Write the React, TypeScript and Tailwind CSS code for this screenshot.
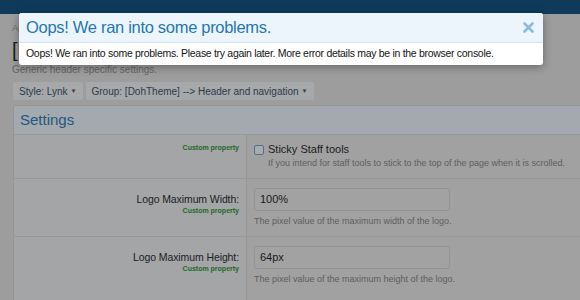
import React from "react";

const Custom = () => (
  <div className="text-[7px] leading-[9px] font-bold text-[#23682a]">Custom property</div>
);

const TextRow = ({ label, value, help, last }: { label: string; value: string; help: string; last?: boolean }) => (
  <div className="flex border-t border-[#989898]">
    <div className="w-[233px] shrink-0 bg-[#a4a5a7] pt-[14px] pr-[7px] text-right border-r border-[#959595]">
      <div className="text-[10.5px] tracking-[-0.1px] leading-[13px] text-[#1d1d1d]">{label}</div>
      <Custom />
    </div>
    <div className={last ? "flex-1 pl-[7px] pt-[9px] pb-[24px]" : "flex-1 pl-[7px] pt-[9px] pb-[9px]"}>
      <div className="w-[196px] h-[23px] rounded-[3px] border border-[#939393] bg-[#a2a2a2] px-[5px] flex items-center text-[11px] text-[#1a1a1a]">
        {value}
      </div>
      <div className="mt-[4px] text-[9px] leading-[12px] text-[#5e5e5e]">{help}</div>
    </div>
  </div>
);

export default function App() {
  return (
    <div
      className="relative w-[580px] h-[300px] overflow-hidden bg-[#9d9d9d]"
      style={{ fontFamily: '"Liberation Sans", Arial, sans-serif' }}
    >
      {/* dimmed page */}
      <div className="h-[14px] bg-[#103a5a]" />
      <div className="px-[12px] pt-[9px]">
        <div className="text-[9px] leading-[11px] text-[#6c6c6c]">Appearance › Styles</div>
        <div className="mt-[5px] text-[20px] leading-[23px] text-[#1c1c1c]">[DohTheme] Header and navigation</div>
        <div className="text-[10px] leading-[12px] text-[#666] mt-[2px]">Generic header specific settings.</div>
        <div className="mt-[6px] flex gap-[3px] pl-px">
          <div className="h-[18px] px-[6px] flex items-center gap-[3px] rounded-[2px] bg-[#a6a8aa] text-[10px] text-[#2c3b4b]">
            Style: Lynk <span className="text-[6px]">▼</span>
          </div>
          <div className="h-[18px] px-[6px] flex items-center gap-[3px] rounded-[2px] bg-[#a6a8aa] text-[10px] text-[#2c3b4b]">
            Group: [DohTheme] --&gt; Header and navigation <span className="text-[6px]">▼</span>
          </div>
        </div>
      </div>

      <div className="ml-[13px] mt-[5px] w-[600px] border border-[#959595] rounded-[2px] bg-[#a1a1a1]">
        <div className="h-[28px] flex items-center px-[6px] bg-[#a3a9ae] text-[15px] text-[#255780]">Settings</div>
        <div className="flex border-t border-[#989898]">
          <div className="w-[233px] shrink-0 bg-[#a4a5a7] pt-[8px] pr-[7px] text-right border-r border-[#959595]">
            <Custom />
          </div>
          <div className="flex-1 pl-[7px] pt-[8px] pb-[9px]">
            <div className="flex items-center gap-[4px]">
              <div className="w-[10px] h-[10px] rounded-[2px] border border-[#51708f] bg-[#a8abaf]" />
              <span className="text-[11px] leading-[13px] text-[#1c1c1c]">Sticky Staff tools</span>
            </div>
            <div className="pl-[14px] mt-px text-[9px] leading-[12px] text-[#5e5e5e]">
              If you intend for staff tools to stick to the top of the page when it is scrolled.
            </div>
          </div>
        </div>
        <TextRow label="Logo Maximum Width:" value="100%" help="The pixel value of the maximum width of the logo." />
        <TextRow label="Logo Maximum Height:" value="64px" help="The pixel value of the maximum height of the logo." last />
      </div>

      {/* error overlay */}
      <div className="absolute left-[19px] top-[13px] w-[524px] rounded-[3px] bg-white shadow-[0_2px_8px_rgba(0,0,0,0.35)] overflow-hidden">
        <div className="h-[30px] flex items-center justify-between pl-[7px] pr-[9px] bg-[#edf5fc] border-b border-[#d6e3ef]">
          <span className="text-[16.5px] tracking-[-0.3px] text-[#2577b1]">Oops! We ran into some problems.</span>
          <svg width="11" height="11" viewBox="0 0 11 11">
            <path d="M1.5 1.5 L9.5 9.5 M9.5 1.5 L1.5 9.5" stroke="#8dbadf" strokeWidth="2.6" strokeLinecap="round" />
          </svg>
        </div>
        <div className="h-[22px] flex items-center px-[7px] whitespace-nowrap text-[10.5px] tracking-[-0.3px] text-[#141414]">
          Oops! We ran into some problems. Please try again later. More error details may be in the browser console.
        </div>
      </div>
    </div>
  );
}
